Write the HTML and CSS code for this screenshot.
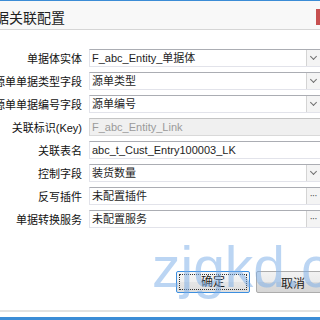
FILE: index.html
```html
<!DOCTYPE html>
<html lang="zh-CN">
<head>
    <meta charset="UTF-8">
    <meta name="viewport" content="width=device-width, initial-scale=1.0">
    <title>单据关联配置</title>
    <link rel="stylesheet" href="styles.css">
</head>
<body>
    <div class="janela">
        <!-- Barra de título -->
        <div class="titulo">
            <span class="titulo-texto">单据关联配置</span>
            <span class="fechar"></span>
        </div>

        <!-- Campos -->
        <div class="form">
            <div class="linha">
                <label>单据体实体</label>
                <div class="campo"><span class="valor">F_abc_Entity_单据体</span><span class="botao seta"></span></div>
            </div>
            <div class="linha">
                <label>源单单据类型字段</label>
                <div class="campo"><span class="valor">源单类型</span><span class="botao seta"></span></div>
            </div>
            <div class="linha">
                <label>源单单据编号字段</label>
                <div class="campo"><span class="valor">源单编号</span><span class="botao seta"></span></div>
            </div>
            <div class="linha">
                <label>关联标识(Key)</label>
                <div class="campo desativado"><span class="valor">F_abc_Entity_Link</span></div>
            </div>
            <div class="linha">
                <label>关联表名</label>
                <div class="campo"><span class="valor">abc_t_Cust_Entry100003_LK</span></div>
            </div>
            <div class="linha">
                <label>控制字段</label>
                <div class="campo"><span class="valor">装货数量</span><span class="botao seta"></span></div>
            </div>
            <div class="linha">
                <label>反写插件</label>
                <div class="campo"><span class="valor">未配置插件</span><span class="botao pontos">···</span></div>
            </div>
            <div class="linha">
                <label>单据转换服务</label>
                <div class="campo"><span class="valor">未配置服务</span><span class="botao pontos">···</span></div>
            </div>
        </div>

        <!-- Botões -->
        <div class="acoes">
            <button class="btn principal"><span>确定</span></button>
            <button class="btn">取消</button>
        </div>

        <div class="rodape"></div>

        <div class="marca">zjgkd.c</div>
    </div>
</body>
</html>
```

FILE: styles.css
```css
* {
    margin: 0;
    padding: 0;
    box-sizing: border-box;
}

body {
    font-family: 'Liberation Sans', 'Noto Sans CJK SC', sans-serif;
    font-size: 11px;
    color: #1e1e1e;
    background-color: #fff;
    width: 320px;
    height: 320px;
    overflow: hidden;
}

.janela {
    position: relative;
    height: 320px;
    display: flex;
    flex-direction: column;
    border-top: 1px solid #3b8cd6;
}

.titulo {
    height: 29px;
    background-color: #f8f8f8;
    border-bottom: 1px solid #d6d6d6;
    display: flex;
    align-items: center;
    justify-content: space-between;
    overflow: hidden;
}

.titulo-texto {
    margin-left: -19px;
    margin-top: 4px;
    font-size: 14px;
    color: #222;
    white-space: nowrap;
}

.fechar {
    width: 4px;
    height: 16px;
    margin-top: 3px;
    background-color: #c75050;
}

.form {
    padding-top: 19px;
    display: flex;
    flex-direction: column;
    gap: 5px;
}

.linha {
    display: flex;
    align-items: center;
    gap: 7px;
    height: 18px;
}

.linha label {
    width: 82px;
    flex-shrink: 0;
    display: flex;
    justify-content: flex-end;
    white-space: nowrap;
    color: #111;
}

.campo {
    flex: 1;
    height: 18px;
    margin-right: -4px;
    display: flex;
    align-items: stretch;
    background-color: #fff;
    border: 1px solid #e2e3ea;
    border-top-color: #abadb3;
}

.valor {
    flex: 1;
    padding-left: 2px;
    line-height: 16px;
    white-space: nowrap;
    overflow: hidden;
}

.campo.desativado {
    background-color: #f0f0f0;
    border-color: #d9d9d9;
    border-top-color: #c4c4c4;
}

.campo.desativado .valor {
    color: #9a9a9a;
}

.botao {
    width: 17px;
    border-left: 1px solid #d4d4d4;
    background-color: #f4f4f4;
    display: flex;
    align-items: center;
    justify-content: center;
    color: #555;
}

.seta::before {
    content: '';
    width: 4px;
    height: 4px;
    margin-top: -3px;
    margin-right: 4px;
    border-right: 1px solid #707070;
    border-bottom: 1px solid #707070;
    transform: rotate(45deg);
}

.pontos {
    font-size: 10px;
    letter-spacing: -1px;
    padding-right: 4px;
    line-height: 14px;
}

.acoes {
    margin-top: 43px;
    display: flex;
    gap: 6px;
    padding-left: 176px;
}

.btn {
    flex-shrink: 0;
    width: 74px;
    height: 22px;
    font-family: inherit;
    font-size: 12px;
    color: #222;
    border: 1px solid #acacac;
    border-radius: 2px;
    background: linear-gradient(#f2f2f2, #ebebeb 50%, #dddddd 51%, #d6d6d6);
}

.btn.principal {
    border-color: #3c8fe0;
    padding: 2px;
    background: linear-gradient(#f6f6f6, #efefef 50%, #e6e6e6 51%, #dedede);
}

.btn.principal span {
    display: block;
    height: 100%;
    line-height: 15px;
    border: 1px dotted #333;
}

.rodape {
    margin-top: auto;
    height: 10px;
    border-top: 2px solid #e2e2e2;
    border-bottom: 3px solid #3b8cd6;
}

.marca {
    position: absolute;
    left: 152px;
    top: 238px;
    font-family: 'Liberation Sans', sans-serif;
    font-size: 57px;
    line-height: 1;
    color: rgba(120, 172, 232, 0.5);
    white-space: nowrap;
    pointer-events: none;
}
```
